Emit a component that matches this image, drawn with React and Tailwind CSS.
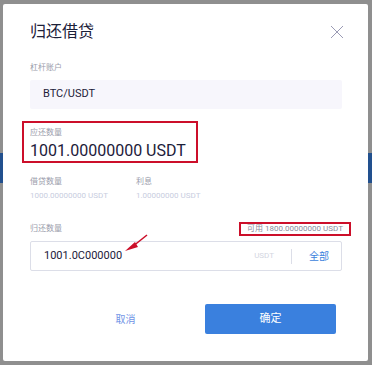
import React from "react";

const font = { fontFamily: '"Roboto", "Noto Sans CJK SC", sans-serif' };

export default function App() {
  return (
    <div className="relative h-[365px] w-[372px] overflow-hidden bg-[#8f8f8f]" style={font}>
      {/* page behind the overlay */}
      <div className="mt-[153px] h-[30px] w-full bg-[#22508e]" />

      {/* modal */}
      <div className="absolute left-[3px] top-[4px] w-[365px] rounded-[2px] bg-white pb-[27px] pl-[27px] pr-[26px] pt-[18px]">
        <div className="flex items-center justify-between">
          <h2 className="text-[16px] leading-[20px] text-[#1c2039]">归还借贷</h2>
          <svg width="14" height="14" viewBox="0 0 14 14" className="mr-[-2px]">
            <path d="M1 1 L13 13 M13 1 L1 13" stroke="#9a9ab4" strokeWidth="1" />
          </svg>
        </div>

        <p className="mt-[20px] text-[8px] leading-[12px] text-[#9a9cab]">杠杆账户</p>
        <div className="mt-[6px] flex h-[29px] items-center rounded-[2px] bg-[#f7f6fc] pl-[13px] text-[11px] text-[#1c2039]">
          BTC/USDT
        </div>

        <div className="-ml-[8px] mt-[12px] w-[176px] border-2 border-[#cc0f2a] pb-0 pl-[6px] pt-[4px]">
          <p className="text-[8px] leading-[12px] text-[#9a9cab]">应还数量</p>
          <p className="mt-[2px] text-[16px] leading-[20px] text-[#1c2039]">1001.00000000 USDT</p>
        </div>

        <div className="mt-[13px] flex gap-[0px]">
          <div className="w-[106px]">
            <p className="text-[8px] leading-[12px] text-[#9a9cab]">借贷数量</p>
            <p className="mt-[2px] text-[8px] leading-[12px] text-[#c8cde0]">1000.00000000 USDT</p>
          </div>
          <div>
            <p className="text-[8px] leading-[12px] text-[#9a9cab]">利息</p>
            <p className="mt-[2px] text-[8px] leading-[12px] text-[#c8cde0]">1.00000000 USDT</p>
          </div>
        </div>

        <div className="relative mt-[20px] flex h-[14px] items-center justify-between">
          <p className="text-[8px] leading-[12px] text-[#9a9cab]">归还数量</p>
          <div className="-mr-[9px] flex h-[14px] w-[112px] items-center justify-center border-2 border-[#cc0f2a] text-[8px] leading-[10px] text-[#8a8d9c]">
            可用 1800.00000000 USDT
          </div>
          <svg className="absolute left-[92px] top-[10px]" width="32" height="24" viewBox="0 0 32 24">
            <path d="M25 3 L10 15" stroke="#cc0f2a" strokeWidth="1.6" />
            <path d="M3 19 L13 10 L16 15 Z" fill="#cc0f2a" />
          </svg>
        </div>

        <div className="mt-[5px] flex h-[30px] items-center rounded-[2px] border border-[#dcdee8] pl-[13px] pr-[12px]">
          <span className="flex-1 text-[11px] text-[#1c2039]">1001.0C000000</span>
          <span className="text-[8px] text-[#d3d6df]">USDT</span>
          <span className="mx-[17px] h-[15px] w-px bg-[#dcdee8]" />
          <span className="text-[10px] text-[#3c7fdc]">全部</span>
        </div>

        <div className="mt-[33px] flex items-center justify-end gap-[14px] pr-[6px]">
          <button className="h-[30px] w-[131px] text-[10px] text-[#6f93e6]">取消</button>
          <button className="h-[30px] w-[131px] rounded-[2px] bg-[#3a80de] text-[11px] text-white">确定</button>
        </div>
      </div>
    </div>
  );
}
